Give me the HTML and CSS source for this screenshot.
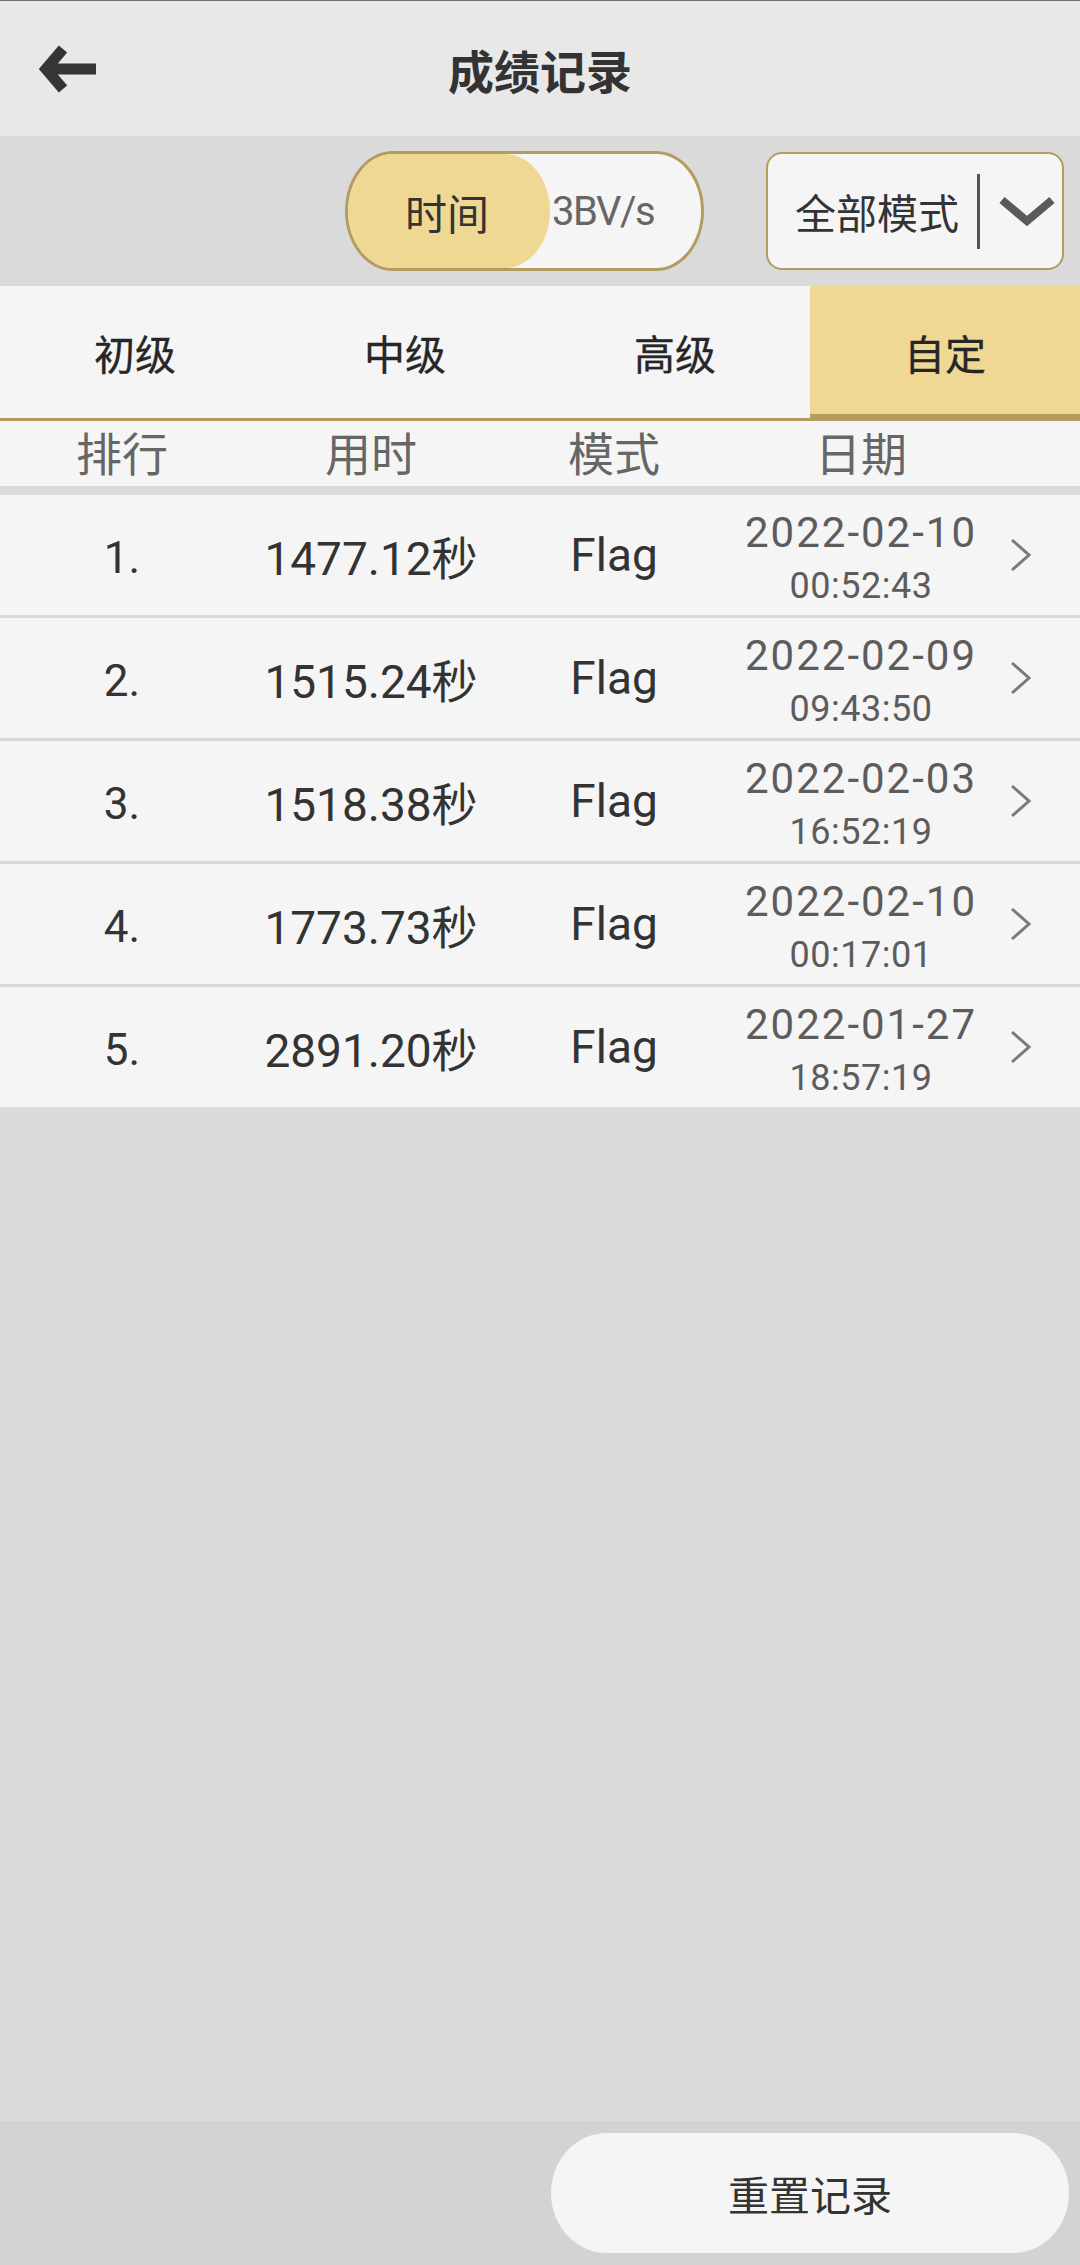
FILE: index.html
```html
<!DOCTYPE html>
<html lang="zh-CN">
  <head>
    <meta charset="UTF-8" />
    <meta name="viewport" content="width=device-width, initial-scale=1.0" />
    <title>成绩记录</title>
    <link rel="stylesheet" href="styles.css">
  </head>
  <body>
    <main>
      <header class="topbar">
        <button class="back">
          <svg width="60" height="50" viewBox="0 0 60 50">
            <polyline points="27,5 10,25 27,45" fill="none" stroke="#353535" stroke-width="11" stroke-linejoin="miter" />
            <line x1="14" y1="25" x2="60" y2="25" stroke="#353535" stroke-width="11" />
          </svg>
        </button>
        <h1>成绩记录</h1>
      </header>

      <section class="filters">
        <div class="toggle">
          <span class="thumb">时间</span>
          <span class="other">3BV/s</span>
        </div>
        <div class="select">
          <span>全部模式</span>
          <i class="divider"></i>
          <svg width="56" height="30" viewBox="0 0 56 30">
            <polyline points="3,4 28,25 53,4" fill="none" stroke="#5a5a5a" stroke-width="8" />
          </svg>
        </div>
      </section>

      <nav class="tabs">
        <span>初级</span>
        <span>中级</span>
        <span>高级</span>
        <span class="active">自定</span>
      </nav>

      <div class="head">
        <span>排行</span>
        <span>用时</span>
        <span>模式</span>
        <span>日期</span>
        <span></span>
      </div>

      <ul class="records">
        <li>
          <span>1.</span><span>1477.12秒</span><span>Flag</span>
          <span class="date"><b>2022-02-10</b><small>00:52:43</small></span>
          <svg class="arrow" width="24" height="34" viewBox="0 0 24 34"><polyline points="3,2 20,17 3,32" fill="none" stroke="#7a7a7a" stroke-width="3" /></svg>
        </li>
        <li>
          <span>2.</span><span>1515.24秒</span><span>Flag</span>
          <span class="date"><b>2022-02-09</b><small>09:43:50</small></span>
          <svg class="arrow" width="24" height="34" viewBox="0 0 24 34"><polyline points="3,2 20,17 3,32" fill="none" stroke="#7a7a7a" stroke-width="3" /></svg>
        </li>
        <li>
          <span>3.</span><span>1518.38秒</span><span>Flag</span>
          <span class="date"><b>2022-02-03</b><small>16:52:19</small></span>
          <svg class="arrow" width="24" height="34" viewBox="0 0 24 34"><polyline points="3,2 20,17 3,32" fill="none" stroke="#7a7a7a" stroke-width="3" /></svg>
        </li>
        <li>
          <span>4.</span><span>1773.73秒</span><span>Flag</span>
          <span class="date"><b>2022-02-10</b><small>00:17:01</small></span>
          <svg class="arrow" width="24" height="34" viewBox="0 0 24 34"><polyline points="3,2 20,17 3,32" fill="none" stroke="#7a7a7a" stroke-width="3" /></svg>
        </li>
        <li>
          <span>5.</span><span>2891.20秒</span><span>Flag</span>
          <span class="date"><b>2022-01-27</b><small>18:57:19</small></span>
          <svg class="arrow" width="24" height="34" viewBox="0 0 24 34"><polyline points="3,2 20,17 3,32" fill="none" stroke="#7a7a7a" stroke-width="3" /></svg>
        </li>
      </ul>

      <div class="spacer"></div>

      <footer class="bottom">
        <button class="reset">重置记录</button>
      </footer>
    </main>
  </body>
</html>
```

FILE: styles.css
```css
:root {
  --text: #333333;
  --muted: #5c5c5c;
  --light: #f5f5f5;
  --gray: #dadada;
  --gold: #b39c60;
  --yellow: #efd894;
}
* {
  margin: 0;
  padding: 0;
  box-sizing: border-box;
  font-family: Roboto, "Noto Sans CJK SC", sans-serif;
}
body {
  background-color: var(--gray);
}
main {
  min-height: 100vh;
  display: flex;
  flex-direction: column;
}

.topbar {
  height: 136px;
  display: flex;
  align-items: center;
  justify-content: center;
  position: relative;
  background-color: #e8e8e8;
  border-top: 1px solid #707070;
}
.topbar h1 {
  font-size: 46px;
  font-weight: 700;
  color: var(--text);
}
.back {
  position: absolute;
  left: 36px;
  top: 43px;
  border: none;
  background: none;
  display: flex;
}

.filters {
  height: 150px;
  display: flex;
  align-items: center;
  justify-content: flex-end;
  gap: 62px;
  padding-right: 16px;
}
.toggle {
  width: 359px;
  height: 120px;
  display: flex;
  align-items: center;
  border: 3px solid var(--gold);
  border-radius: 48px / 60px;
  background-color: var(--light);
  overflow: hidden;
}
.toggle .thumb {
  width: 202px;
  height: 100%;
  display: flex;
  align-items: center;
  justify-content: center;
  padding-right: 4px;
  border-radius: 46px / 58px;
  background-color: var(--yellow);
  font-size: 42px;
  color: var(--text);
}
.toggle .other {
  padding-left: 2px;
  font-size: 40px;
  letter-spacing: -1.5px;
  color: #666666;
}
.select {
  width: 298px;
  height: 118px;
  display: flex;
  align-items: center;
  padding-left: 27px;
  border: 2px solid var(--gold);
  border-radius: 16px;
  background-color: var(--light);
}
.select span {
  font-size: 41px;
  color: var(--text);
}
.select .divider {
  width: 3px;
  height: 75px;
  margin: 0 19px 0 18px;
  background-color: #555555;
}

.tabs {
  display: grid;
  grid-template-columns: repeat(4, 1fr);
  background-color: var(--light);
  border-bottom: 3px solid var(--gold);
}
.tabs span {
  height: 132px;
  display: flex;
  align-items: center;
  justify-content: center;
  font-size: 41px;
  font-weight: 400;
  color: #262626;
  -webkit-text-stroke: 0.3px #262626;
}
.tabs .active {
  height: 132px;
  padding-top: 4px;
  background-color: var(--yellow);
  border-bottom: 4px solid var(--gold);
}

.head,
.records li {
  display: grid;
  grid-template-columns: 244px 254px 232px 262px 1fr;
  align-items: center;
  justify-items: center;
}
.head {
  height: 65px;
  margin-bottom: 9px;
  padding-top: 3px;
  background-color: var(--light);
  font-size: 46px;
  line-height: 1;
  color: #666666;
}

.records {
  list-style: none;
  display: flex;
  flex-direction: column;
  gap: 3px;
  background-color: #d9d9d9;
}
.records li {
  height: 120px;
  background-color: var(--light);
  font-size: 46px;
  color: var(--text);
}
.records li > span:first-child {
  font-size: 44px;
  padding-top: 6px;
}
.date {
  display: flex;
  flex-direction: column;
  align-items: center;
  padding-top: 5px;
  color: var(--muted);
}
.date b {
  font-weight: 400;
  font-size: 42px;
  line-height: 50px;
  letter-spacing: 2px;
}
.date small {
  font-size: 36px;
  line-height: 42px;
  margin-top: 7px;
  letter-spacing: 0.5px;
}
.arrow {
  justify-self: start;
  margin-left: 17px;
}

.spacer {
  flex: 1;
}

.bottom {
  height: 144px;
  display: flex;
  align-items: center;
  justify-content: flex-end;
  padding-right: 11px;
  background-color: #d3d3d3;
}
.reset {
  width: 518px;
  height: 120px;
  border: none;
  border-radius: 56px / 60px;
  background-color: var(--light);
  font-size: 41px;
  color: var(--text);
}
```
